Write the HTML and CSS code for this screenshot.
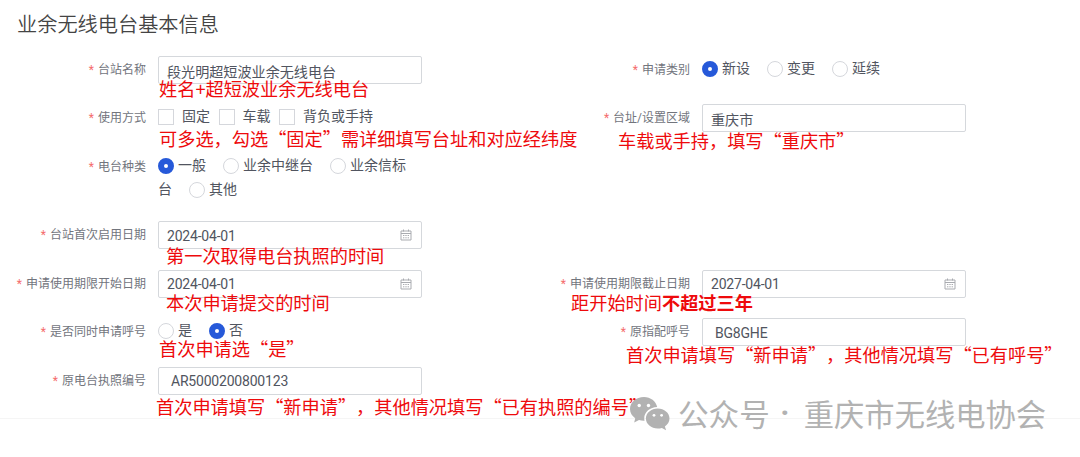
FILE: index.html
```html
<!DOCTYPE html>
<html lang="zh-CN">
<head>
    <meta charset="UTF-8" />
    <title>业余无线电台基本信息</title>
    <link rel="stylesheet" href="styles.css">
</head>
<body>

<svg width="0" height="0" class="defs">
    <symbol id="calendar" viewBox="0 0 12 12">
        <path d="M1 2h10v9H1zM1 4.5h10M3.5 .5v2M8.5 .5v2" fill="none" stroke="currentColor" />
        <path d="M3 6.5h1.4M5.3 6.5h1.4M7.6 6.5H9M3 8.8h1.4M5.3 8.8h1.4M7.6 8.8H9" fill="none" stroke="currentColor" />
    </symbol>
</svg>

<div class="page">
    <h1>业余无线电台基本信息</h1>

    <div class="form">
        <div class="item">
            <div class="label">台站名称</div>
            <div class="control">
                <div class="input">段光明超短波业余无线电台</div>
                <div class="note note-name">姓名+超短波业余无线电台</div>
            </div>
        </div>
        <div class="item">
            <div class="label">申请类别</div>
            <div class="control options">
                <i class="radio checked"></i><span class="text">新设</span>
                <i class="radio"></i><span class="text">变更</span>
                <i class="radio"></i><span class="text">延续</span>
            </div>
        </div>

        <div class="item">
            <div class="label">使用方式</div>
            <div class="control options">
                <i class="checkbox"></i><span class="check-text">固定</span>
                <i class="checkbox"></i><span class="check-text">车载</span>
                <i class="checkbox"></i><span class="check-text">背负或手持</span>
                <div class="note note-usage">可多选，勾选“固定”需详细填写台址和对应经纬度</div>
            </div>
        </div>
        <div class="item">
            <div class="label">台址/设置区域</div>
            <div class="control">
                <div class="input">重庆市</div>
                <div class="note note-area">车载或手持，填写“重庆市”</div>
            </div>
        </div>

        <div class="item">
            <div class="label">电台种类</div>
            <div class="control options">
                <i class="radio checked"></i><span class="text">一般</span>
                <i class="radio"></i><span class="text">业余中继台</span>
                <i class="radio"></i><span class="text">业余信标台</span>
                <i class="radio"></i><span class="text">其他</span>
            </div>
        </div>
        <div class="item"></div>

        <div class="item">
            <div class="label">台站首次启用日期</div>
            <div class="control">
                <div class="input latin">2024-04-01<svg class="icon"><use href="#calendar" /></svg></div>
                <div class="note note-first">第一次取得电台执照的时间</div>
            </div>
        </div>
        <div class="item"></div>

        <div class="item">
            <div class="label">申请使用期限开始日期</div>
            <div class="control">
                <div class="input latin">2024-04-01<svg class="icon"><use href="#calendar" /></svg></div>
                <div class="note note-start">本次申请提交的时间</div>
            </div>
        </div>
        <div class="item">
            <div class="label">申请使用期限截止日期</div>
            <div class="control">
                <div class="input latin">2027-04-01<svg class="icon"><use href="#calendar" /></svg></div>
                <div class="note note-end">距开始时间<b>不超过三年</b></div>
            </div>
        </div>

        <div class="item">
            <div class="label">是否同时申请呼号</div>
            <div class="control options">
                <i class="radio"></i><span class="text">是</span>
                <i class="radio checked"></i><span class="text">否</span>
                <div class="note note-call">首次申请选“是”</div>
            </div>
        </div>
        <div class="item">
            <div class="label">原指配呼号</div>
            <div class="control">
                <div class="input latin indent">BG8GHE</div>
                <div class="note note-sign">首次申请填写“新申请”，其他情况填写“已有呼号”</div>
            </div>
        </div>

        <div class="item">
            <div class="label">原电台执照编号</div>
            <div class="control">
                <div class="input latin indent">AR5000200800123</div>
                <div class="note note-license">首次申请填写“新申请”，其他情况填写“已有执照的编号”</div>
            </div>
        </div>
    </div>

    <div class="watermark">
        <svg class="wechat" viewBox="0 0 40 34">
            <path d="M14 0C6.200 0 0 5.300 0 12c0 3.700 2 7 5.200 9.200L4.200 25.500l4.800-2.400c1.800.5 3.600.8 5.600.7A10.500 10.500 0 0 1 14.200 21.500c0-6.500 6-11.200 13-11.400C26 4.300 20.500 0 14 0z" fill="#b2b2b2" />
            <path d="M39.500 21.500c0-5.600-5.300-10-11.800-10s-11.800 4.400-11.800 10 5.300 10 11.800 10c1.500 0 2.900-.2 4.200-.6l4.200 2.300-1.200-3.800c2.800-1.900 4.600-4.700 4.600-7.900z" fill="#b2b2b2" />
            <g fill="#fff">
                <circle cx="9.200" cy="8.500" r="1.700" />
                <circle cx="18.500" cy="8.500" r="1.700" />
                <circle cx="24" cy="18.300" r="1.400" />
                <circle cx="31.600" cy="18.300" r="1.400" />
            </g>
        </svg>
        <span class="account">公众号</span>
        <span class="dot">·</span>
        <span class="owner">重庆市无线电协会</span>
    </div>
</div>

</body>
</html>
```
FILE: styles.css
```css
html, body {
    margin: 0;
    padding: 0;
    height: 100%;
    background: #fff;
    font-family: Roboto, 'Noto Sans CJK SC', sans-serif;
    color: #515560;
    overflow: hidden;
}

.defs {
    position: absolute;
}

.page {
    position: relative;
    height: 419px;
    border-bottom: 1px solid #f5f5f5;
    box-sizing: border-box;
}

h1 {
    margin: 0;
    padding: 11px 0 0 17px;
    height: 45px;
    line-height: 28px;
    font-size: 20.2px;
    font-weight: 350;
    color: #444;
}

/* FORM */
.form {
    display: grid;
    grid-template-columns: 544px 536px;
    grid-template-rows: 48.4px 48.4px 68.6px repeat(4, 48.4px);
}

.item {
    display: flex;
    gap: 12px;
}

.label {
    width: 146px;
    line-height: 29px;
    font-size: 12px;
    text-align: right;
    white-space: nowrap;
    color: #72757d;
}
.label::before {
    content: '*';
    margin-right: 4px;
    color: #f56c6c;
}

.control {
    position: relative;
    width: 264px;
}

.input {
    display: flex;
    align-items: center;
    justify-content: space-between;
    height: 28px;
    box-sizing: border-box;
    padding: 1px 9px 0 8px;
    border: 1px solid #d5d8dc;
    border-radius: 2px;
    font-size: 14.1px;
}
.input.latin {
    font-size: 14px;
    letter-spacing: -0.2px;
}
.input.indent {
    padding-left: 12px;
}

.icon {
    width: 12px;
    height: 12px;
    color: #a9abb0;
    margin-bottom: 1px;
}

.options {
    font-size: 0;
    line-height: 0;
}

.text, .check-text {
    font-size: 14px;
    line-height: 24px;
}
.text {
    margin: 0 17px 0 4px;
}
.check-text {
    margin: 0 8.500px 0 8px;
}

.radio, .checkbox {
    display: inline-block;
    width: 16px;
    height: 16px;
    box-sizing: border-box;
    border: 1px solid #d5d7dc;
    vertical-align: -4px;
}
.radio {
    border-radius: 50%;
}
.radio.checked {
    border: 6px solid #2659d9;
}

/* RED NOTES */
.note {
    position: absolute;
    left: 1px;
    line-height: 24px;
    font-family: 'Noto Sans CJK SC', sans-serif;
    font-size: 18.2px;
    text-spacing-trim: space-all;
    white-space: nowrap;
    color: #ee0a0c;
}
.note-name {
    top: 20px;
}
.note-usage {
    top: 22px;
}
.note-area {
    top: 24px;
    left: -84px;
}
.note-first {
    top: 22px;
    left: 8px;
}
.note-start {
    top: 20px;
    left: 8px;
}
.note-end {
    top: 20px;
    left: -131px;
}
.note-call {
    top: 18px;
}
.note-sign {
    top: 24px;
    left: -76px;
}
.note-license {
    top: 27px;
    left: -2px;
}

/* WATERMARK */
.watermark {
    position: absolute;
    left: 630px;
    top: 391px;
    display: flex;
    align-items: center;
    height: 44px;
    font-family: 'Noto Sans CJK SC', sans-serif;
    font-size: 30.600px;
    line-height: 44px;
    white-space: nowrap;
    color: #b2b2b2;
}
.wechat {
    width: 40px;
    height: 34px;
    margin: 1px 8px 0 0;
}
.dot {
    width: 30px;
    margin-right: 4px;
    font-family: Roboto, sans-serif;
    font-weight: 700;
    text-align: center;
}
.owner {
    font-size: 30.300px;
}
```
